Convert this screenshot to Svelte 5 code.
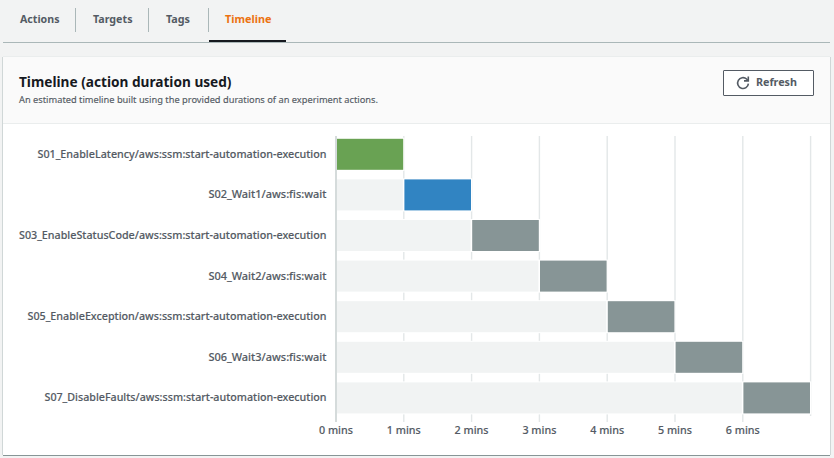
<script>
  const tabs = [
    { label: 'Actions', width: 39.5 },
    { label: 'Targets', width: 39.5 },
    { label: 'Tags', width: 24 },
    { label: 'Timeline', width: 46.5, active: true },
  ];

  const step = 67.8;
  const rowStep = 40.6;
  const originX = 333;

  const rows = [
    { label: 'S01_EnableLatency/aws:ssm:start-automation-execution', width: 289, color: '#69a253' },
    { label: 'S02_Wait1/aws:fis:wait', width: 118, color: '#3184c2' },
    { label: 'S03_EnableStatusCode/aws:ssm:start-automation-execution', width: 307.5, color: '#879596' },
    { label: 'S04_Wait2/aws:fis:wait', width: 118, color: '#879596' },
    { label: 'S05_EnableException/aws:ssm:start-automation-execution', width: 299, color: '#879596' },
    { label: 'S06_Wait3/aws:fis:wait', width: 118, color: '#879596' },
    { label: 'S07_DisableFaults/aws:ssm:start-automation-execution', width: 282, color: '#879596' },
  ];
</script>

<main>
  <nav>
    {#each tabs as tab}
      <button class="tab" class:active={tab.active}>
        <svg class="label" width={tab.width} height="18">
          <text x="0" y="12" textLength={tab.width} lengthAdjust="spacingAndGlyphs">{tab.label}</text>
        </svg>
      </button>
    {/each}
  </nav>

  <section class="card">
    <header>
      <div class="heading">
        <svg class="title" width="214" height="20" role="heading" aria-level="2">
          <text x="0" y="15" textLength="212.5" lengthAdjust="spacingAndGlyphs">Timeline (action duration used)</text>
        </svg>
        <svg class="description" width="361" height="14">
          <text x="0" y="10" textLength="359" lengthAdjust="spacingAndGlyphs">An estimated timeline built using the provided durations of an experiment actions.</text>
        </svg>
      </div>
      <button class="refresh">
        <svg width="14" height="14" viewBox="0 0 14 14" fill="none" stroke="#545b64" stroke-width="1.6">
          <path d="M12.4 7.6A5.4 5.4 0 1 1 10.6 3L12.2 4.7" />
          <path d="M12.3 .6V4.9H8" />
        </svg>
        <svg class="label" width="41" height="18">
          <text x="0" y="12" textLength="41" lengthAdjust="spacingAndGlyphs">Refresh</text>
        </svg>
      </button>
    </header>

    <svg class="chart" width="827" height="331">
      {#each Array(7) as _, i}
        <rect x={originX + step * (i + 1) - 0.7} y="12" width="1.4" height={i === 6 ? 280 : 286} fill="#e3e7e8" />
      {/each}
      {#each rows as row, i}
        {@const y = 14.8 + rowStep * i}
        {@const x = originX + step * i}
        <rect x={originX} y={y - 1} width={step * (i + 1) + 0.7} height="33" fill="#fff" />
        {#if i > 0}
          <rect x={originX} {y} width={step * i - 1} height="31" fill="#f1f3f3" />
        {/if}
        <rect x={x + 0.6} {y} width={step - 1.2} height="31" fill={row.color} />
        <text x={323.5 - row.width} y={Math.round(33.57 + 40.65 * i)} textLength={row.width} lengthAdjust="spacingAndGlyphs">{row.label}</text>
      {/each}
      <rect x="332" y="12" width="2" height="286" fill="#d5dbdb" />
      {#each rows as _, i}
        <text x={originX + step * i - 17} y="310" textLength="34" lengthAdjust="spacingAndGlyphs">{i} mins</text>
      {/each}
    </svg>
  </section>
</main>

<style>
  :global(body) {
    background: #f2f3f3;
  }

  main {
    box-sizing: border-box;
    width: 834px;
    height: 458px;
    padding: 0 3px;
    overflow: hidden;
    font-family: 'Noto Sans', 'Open Sans', sans-serif;
  }

  svg {
    display: block;
    overflow: visible;
  }

  button {
    margin: 0;
    padding: 0;
    font: inherit;
  }

  nav {
    display: flex;
    box-sizing: border-box;
    width: 827px;
    height: 43px;
    border-bottom: 1px solid #aab7b8;
  }

  .tab {
    display: flex;
    align-items: flex-start;
    height: 42px;
    padding: 11px 16.5px 0 17px;
    border: 0;
    background: linear-gradient(#aab7b8, #aab7b8) right 8px / 1px 24px no-repeat;
  }

  .tab:nth-child(3) {
    padding-right: 18.5px;
  }

  .tab.active {
    box-sizing: border-box;
    width: 78px;
    padding-left: 16.5px;
    background: linear-gradient(#16191f, #16191f) left bottom / 77px 2px no-repeat;
  }

  .label text {
    font-size: 11px;
    font-weight: 700;
    fill: #545b64;
  }

  .active .label text {
    fill: #ec7211;
  }

  .card {
    width: 827px;
    height: 398px;
    margin-top: 14px;
    background: #fff;
    box-shadow: 0 1px 0 #879596, -1px 0 0 #d0d7d7, 1px 0 0 #d0d7d7, 0 -1px 0 #eaeded;
  }

  header {
    display: flex;
    justify-content: space-between;
    box-sizing: border-box;
    height: 67px;
    padding: 13px 16px 0;
    border-bottom: 1px solid #eaeded;
    background: #fafafa;
  }

  .heading {
    display: flex;
    flex-direction: column;
    padding-top: 2px;
  }

  .title text {
    font-size: 14.5px;
    font-weight: 700;
    fill: #16191f;
  }

  .description text {
    font-size: 9.5px;
    font-weight: 400;
    fill: #545b64;
    stroke: #545b64;
    stroke-width: 0.15px;
  }

  .description {
    margin-top: 1px;
  }

  .refresh {
    display: flex;
    align-items: center;
    box-sizing: border-box;
    width: 91px;
    height: 26px;
    padding-left: 12px;
    gap: 6px;
    border: 1px solid #545b64;
    border-radius: 1px;
    background: #fff;
  }

  .chart text {
    font-size: 11px;
    font-weight: 500;
    fill: #545b64;
    stroke: #545b64;
    stroke-width: 0.15px;
  }
</style>
